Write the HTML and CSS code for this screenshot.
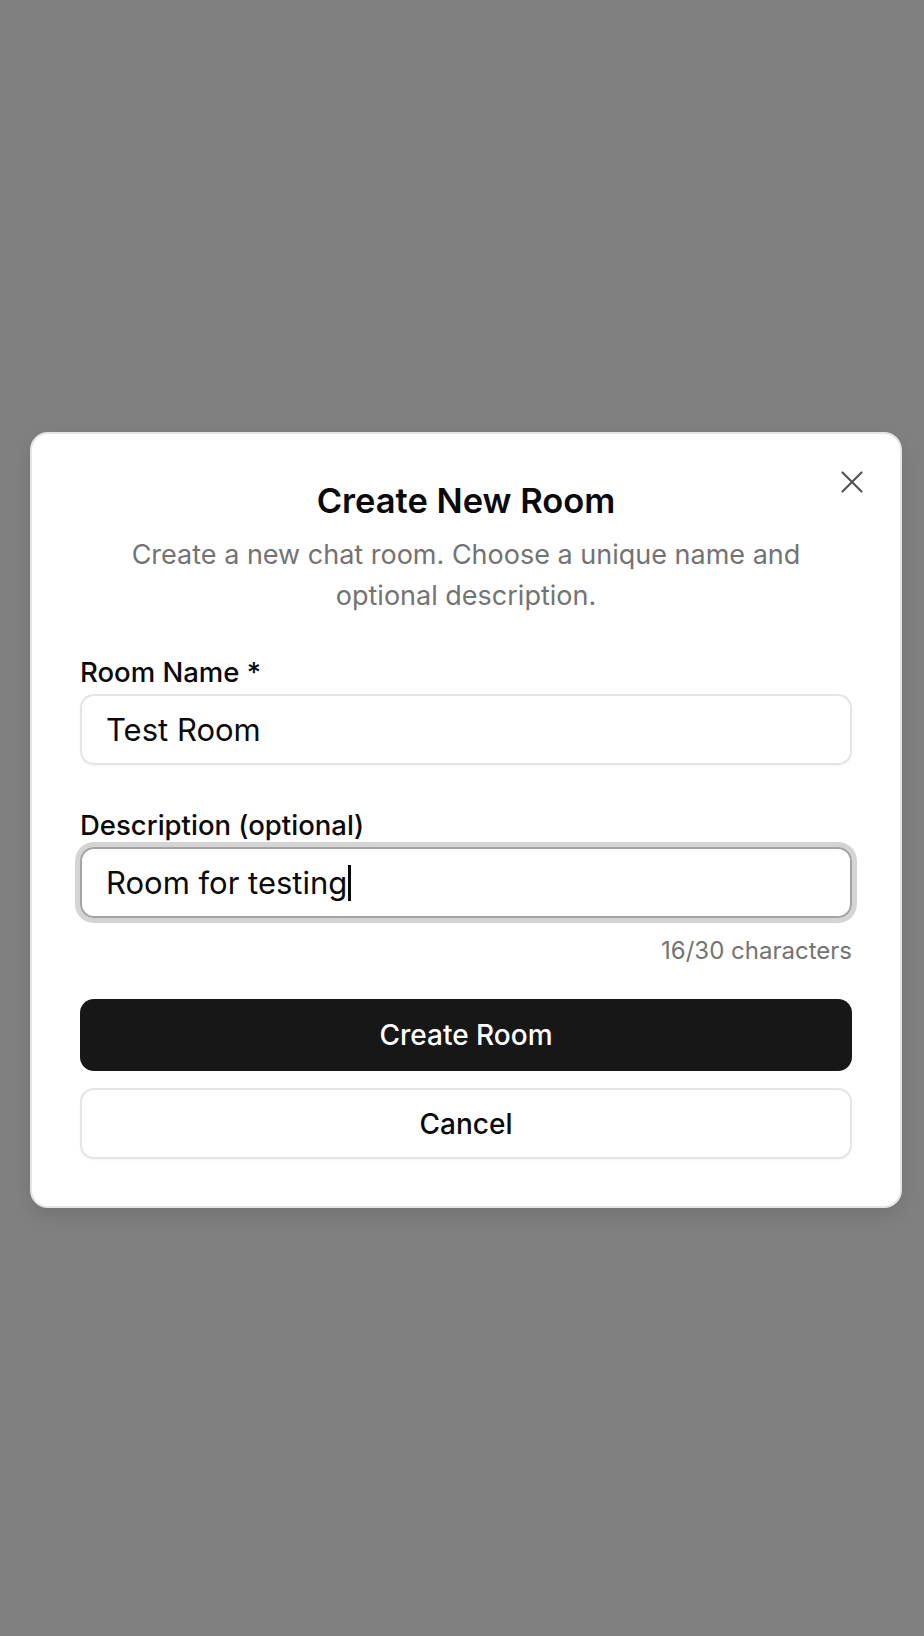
FILE: index.html
```html
<!DOCTYPE html>
<html lang="en">
<head>
<meta charset="utf-8">
<title>Create New Room</title>
<link rel="stylesheet" href="styles.css">
</head>
<body>
<div class="overlay">
  <div class="dialog" role="dialog" aria-labelledby="dlg-title">
    <button class="close" aria-label="Close">
      <svg viewBox="0 0 24 24" width="38" height="38" fill="none" stroke="currentColor" stroke-width="1.4" stroke-linecap="round" stroke-linejoin="round"><path d="M18 6 6 18"/><path d="m6 6 12 12"/></svg>
    </button>
    <div class="header">
      <h2 id="dlg-title" class="title">Create New Room</h2>
      <p class="desc">Create a new chat room. Choose a unique name and optional description.</p>
    </div>
    <div class="field field-first">
      <label class="label">Room Name *</label>
      <div class="input">Test Room</div>
    </div>
    <div class="field">
      <label class="label">Description (optional)</label>
      <div class="input input-focus">Room for testing<span class="caret"></span></div>
      <div class="counter">16/30 characters</div>
    </div>
    <div class="actions">
      <button class="btn btn-primary">Create Room</button>
      <button class="btn btn-outline">Cancel</button>
    </div>
  </div>
</div>
</body>
</html>
```
FILE: styles.css
```css
* { box-sizing: border-box; }
html, body { margin: 0; padding: 0; }
body {
  background: #808080;
  font-family: Inter, "Noto Sans", "Liberation Sans", sans-serif;
  color: #0a0a0a;
}
.overlay {
  min-height: 1636px;
  padding-top: 432px;
  padding-left: 30px;
}
.dialog {
  position: relative;
  width: 872px;
  background: #ffffff;
  border: 2px solid #e5e5e5;
  border-radius: 18px;
  padding: 47px 48px 47px;
  box-shadow: 0 8px 20px rgba(0,0,0,0.10);
}
.close {
  position: absolute;
  top: 29px;
  right: 29px;
  width: 38px;
  height: 38px;
  padding: 0;
  border: 0;
  background: transparent;
  color: #555555;
  display: flex;
}
.header {
  text-align: center;
  display: flex;
  flex-direction: column;
  align-items: center;
}
.title {
  margin: 0;
  font-size: 34.5px;
  line-height: 40px;
  font-weight: 600;
}
.desc {
  margin: 13px 0 0;
  max-width: 720px;
  font-size: 27px;
  line-height: 41px;
  color: #737373;
}
.field { display: flex; flex-direction: column; }
.field-first { margin-top: 40px; }
.field + .field { margin-top: 44px; }
.label {
  font-size: 27.5px;
  line-height: 32px;
  font-weight: 500;
  margin-bottom: 6px;
}
.input {
  height: 71px;
  border: 2px solid #e5e5e5;
  border-radius: 14px;
  padding: 0 24px;
  display: flex;
  align-items: center;
  font-size: 31px;
  box-shadow: 0 1px 2px rgba(0,0,0,0.05);
}
.input-focus {
  border-color: #a3a3a3;
  box-shadow: 0 0 0 5px #d4d4d4;
}
.caret {
  display: inline-block;
  width: 3px;
  height: 36px;
  background: #0a0a0a;
  margin-left: 1px;
}
.counter {
  text-align: right;
  font-size: 24px;
  line-height: 30px;
  color: #737373;
  margin-top: 18px;
}
.actions {
  display: flex;
  flex-direction: column;
  gap: 17px;
  margin-top: 33px;
}
.btn {
  font-family: inherit;
  font-size: 28px;
  font-weight: 500;
  border-radius: 14px;
  cursor: pointer;
}
.btn-primary {
  height: 72px;
  background: #171717;
  color: #ffffff;
  border: 0;
}
.btn-outline {
  height: 71px;
  background: #ffffff;
  color: #0a0a0a;
  border: 2px solid #e5e5e5;
  box-shadow: 0 1px 2px rgba(0,0,0,0.05);
}
```
